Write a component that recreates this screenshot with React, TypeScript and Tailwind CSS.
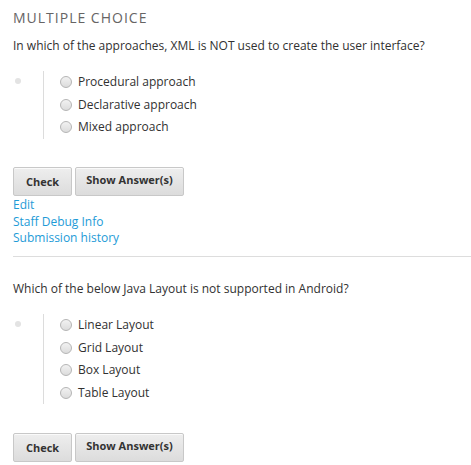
import React from "react";

const Radio = () => (
  <span className="inline-block w-[12px] h-[12px] rounded-full border border-[#b5b5b5] bg-gradient-to-b from-[#f2f2f2] to-[#dcdcdc] shrink-0" />
);

const Btn = ({ children, w, up }: { children: React.ReactNode; w: string; up?: boolean }) => (
  <button
    className={`h-[29px] ${w} rounded-[2px] border border-[#c8c8c8] bg-gradient-to-b from-[#eeeeee] to-[#dcdcdc] text-[11px] leading-[14px] font-bold text-[#333] shadow-[inset_0_1px_0_#fafafa] flex items-center justify-center ${up ? "pb-[3px]" : "pt-[1px]"}`}
  >
    {children}
  </button>
);

const Problem = ({ q, options }: { q: string; options: string[] }) => (
  <div>
    <p className="text-[12px] leading-[18px] text-[#313131]">{q}</p>
    <div className="flex mt-[16px]">
      <div className="w-[30px] flex pt-[7px] pl-[2px]">
        <span className="block w-[6px] h-[6px] rounded-full bg-[#e3e3e3]" />
      </div>
      <div className="border-l border-[#dcdcdc] pl-[16px]">
        {options.map((o) => (
          <div key={o} className="flex items-center gap-[6px] h-[22.5px]">
            <Radio />
            <span className="text-[12px] text-[#313131]">{o}</span>
          </div>
        ))}
      </div>
    </div>
  </div>
);

const Buttons = () => (
  <div className="flex gap-[3px] mt-[28.5px]">
    <Btn w="w-[59px]">Check</Btn>
    <Btn w="w-[109px]" up>
      Show Answer(s)
    </Btn>
  </div>
);

export default function App() {
  return (
    <div className="w-[471px] h-[465px] bg-white overflow-hidden pl-[13px]" style={{ fontFamily: '"Open Sans", sans-serif' }}>
      <h2 className="pt-[9px] text-[14px] leading-[18px] tracking-[1px] text-[#666464] uppercase">Multiple Choice</h2>
      <div className="mt-[10px]">
        <Problem
          q="In which of the approaches, XML is NOT used to create the user interface?"
          options={["Procedural approach", "Declarative approach", "Mixed approach"]}
        />
      </div>
      <Buttons />
      <div className="flex flex-col text-[12px] leading-[16.5px] text-[#1e9bd7] mt-[1px]">
        <a>Edit</a>
        <a>Staff Debug Info</a>
        <a>Submission history</a>
      </div>
      <hr className="border-0 border-t border-[#dddddd] mt-[9.5px]" />
      <div className="mt-[23px]">
        <Problem
          q="Which of the below Java Layout is not supported in Android?"
          options={["Linear Layout", "Grid Layout", "Box Layout", "Table Layout"]}
        />
      </div>
      <Buttons />
    </div>
  );
}
